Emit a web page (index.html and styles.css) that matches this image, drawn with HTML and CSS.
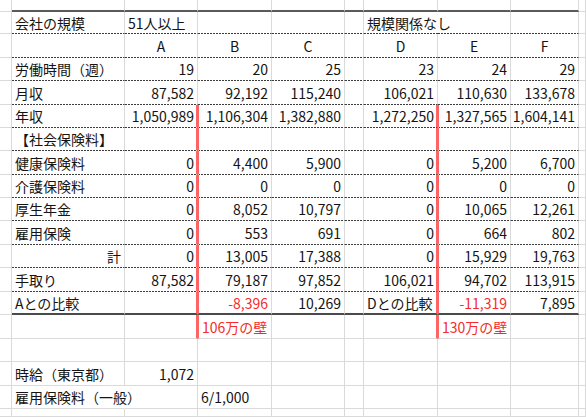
FILE: index.html
```html
<!DOCTYPE html>
<html lang="ja">
<head>
<meta charset="utf-8">
<title>社会保険料の比較</title>
<link rel="stylesheet" href="styles.css">
</head>
<body>
<div class="sheet">
  <div class="row">
    <div class="c"></div><div class="c top"></div><div class="c top"></div><div class="c top"></div><div class="c top"></div><div class="c top"></div><div class="c top"></div><div class="c top"></div><div class="c top"></div><div class="c"></div>
  </div>
  <div class="row">
    <div class="c"></div><div class="c d">会社の規模</div><div class="c d">51人以上</div><div class="c d"></div><div class="c d"></div><div class="c d"></div><div class="c d nr">規模関係なし</div><div class="c d"></div><div class="c d"></div><div class="c"></div>
  </div>
  <div class="row">
    <div class="c"></div><div class="c d"></div><div class="c d m">A</div><div class="c d m">B</div><div class="c d m">C</div><div class="c d"></div><div class="c d m">D</div><div class="c d m">E</div><div class="c d m">F</div><div class="c"></div>
  </div>
  <div class="row">
    <div class="c"></div><div class="c d">労働時間（週）</div><div class="c d n">19</div><div class="c d n">20</div><div class="c d n">25</div><div class="c d"></div><div class="c d n">23</div><div class="c d n">24</div><div class="c d n">29</div><div class="c"></div>
  </div>
  <div class="row">
    <div class="c"></div><div class="c d">月収</div><div class="c d n">87,582</div><div class="c d n">92,192</div><div class="c d n">115,240</div><div class="c d"></div><div class="c d n">106,021</div><div class="c d n">110,630</div><div class="c d n">133,678</div><div class="c"></div>
  </div>
  <div class="row">
    <div class="c"></div><div class="c d">年収</div><div class="c d n wr">1,050,989</div><div class="c d n wl">1,106,304</div><div class="c d n">1,382,880</div><div class="c d"></div><div class="c d n wr">1,272,250</div><div class="c d n wl">1,327,565</div><div class="c d n">1,604,141</div><div class="c"></div>
  </div>
  <div class="row">
    <div class="c"></div><div class="c d">【社会保険料】</div><div class="c d wr"></div><div class="c d wl"></div><div class="c d"></div><div class="c d"></div><div class="c d wr"></div><div class="c d wl"></div><div class="c d"></div><div class="c"></div>
  </div>
  <div class="row">
    <div class="c"></div><div class="c d">健康保険料</div><div class="c d n wr">0</div><div class="c d n wl">4,400</div><div class="c d n">5,900</div><div class="c d"></div><div class="c d n wr">0</div><div class="c d n wl">5,200</div><div class="c d n">6,700</div><div class="c"></div>
  </div>
  <div class="row">
    <div class="c"></div><div class="c d">介護保険料</div><div class="c d n wr">0</div><div class="c d n wl">0</div><div class="c d n">0</div><div class="c d"></div><div class="c d n wr">0</div><div class="c d n wl">0</div><div class="c d n">0</div><div class="c"></div>
  </div>
  <div class="row">
    <div class="c"></div><div class="c d">厚生年金</div><div class="c d n wr">0</div><div class="c d n wl">8,052</div><div class="c d n">10,797</div><div class="c d"></div><div class="c d n wr">0</div><div class="c d n wl">10,065</div><div class="c d n">12,261</div><div class="c"></div>
  </div>
  <div class="row">
    <div class="c"></div><div class="c d">雇用保険</div><div class="c d n wr">0</div><div class="c d n wl">553</div><div class="c d n">691</div><div class="c d"></div><div class="c d n wr">0</div><div class="c d n wl">664</div><div class="c d n">802</div><div class="c"></div>
  </div>
  <div class="row">
    <div class="c"></div><div class="c d n">計</div><div class="c d n wr">0</div><div class="c d n wl">13,005</div><div class="c d n">17,388</div><div class="c d"></div><div class="c d n wr">0</div><div class="c d n wl">15,929</div><div class="c d n">19,763</div><div class="c"></div>
  </div>
  <div class="row">
    <div class="c"></div><div class="c d">手取り</div><div class="c d n wr">87,582</div><div class="c d n wl">79,187</div><div class="c d n">97,852</div><div class="c d"></div><div class="c d n wr">106,021</div><div class="c d n wl">94,702</div><div class="c d n">113,915</div><div class="c"></div>
  </div>
  <div class="row">
    <div class="c"></div><div class="c s">Aとの比較</div><div class="c s wr"></div><div class="c s n wl red">-8,396</div><div class="c s n">10,269</div><div class="c s"></div><div class="c s wr">Dとの比較</div><div class="c s n wl red">-11,319</div><div class="c s n">7,895</div><div class="c"></div>
  </div>
  <div class="row">
    <div class="c"></div><div class="c"></div><div class="c wr"></div><div class="c wl red">106万の壁</div><div class="c"></div><div class="c"></div><div class="c wr"></div><div class="c wl red">130万の壁</div><div class="c"></div><div class="c"></div>
  </div>
  <div class="row">
    <div class="c"></div><div class="c"></div><div class="c"></div><div class="c"></div><div class="c"></div><div class="c"></div><div class="c"></div><div class="c"></div><div class="c"></div><div class="c"></div>
  </div>
  <div class="row">
    <div class="c"></div><div class="c">時給（東京都）</div><div class="c n">1,072</div><div class="c"></div><div class="c"></div><div class="c"></div><div class="c"></div><div class="c"></div><div class="c"></div><div class="c"></div>
  </div>
  <div class="row">
    <div class="c"></div><div class="c nr">雇用保険料（一般）</div><div class="c"></div><div class="c">6/1,000</div><div class="c"></div><div class="c"></div><div class="c"></div><div class="c"></div><div class="c"></div><div class="c"></div>
  </div>
  <div class="row">
    <div class="c"></div><div class="c"></div><div class="c"></div><div class="c"></div><div class="c"></div><div class="c"></div><div class="c"></div><div class="c"></div><div class="c"></div><div class="c"></div>
  </div>
</div>
</body>
</html>
```

FILE: styles.css
```css
html, body {
  margin: 0;
  padding: 0;
  background: #fff;
}

body {
  width: 586px;
  height: 417px;
  overflow: hidden;
  font-family: "Noto Sans CJK JP", "Noto Sans", sans-serif;
  font-size: 14px;
  color: #141414;
}

.sheet {
  display: grid;
  grid-template-columns: 12px 113px 73px 74px 73px 19px 74px 73px 68px 1fr;
  grid-template-rows: 12px 22px 24px 23px 24px 23px 23px 24px 23px 23px 24px 23px 24px 23px 24px 23px 24px 23px 8px;
}

.row {
  display: contents;
}

.c {
  box-sizing: border-box;
  display: flex;
  align-items: center;
  justify-content: flex-start;
  padding: 0 3px 0 3px;
  border-right: 1px solid #dadada;
  border-bottom: 1px solid #dadada;
  white-space: nowrap;
  overflow: visible;
  line-height: 1;
  min-width: 0;
}

/* right-aligned numbers */
.n {
  justify-content: flex-end;
}

/* centered headers */
.m {
  justify-content: center;
  padding: 0;
}

/* hide gridline where text overflows */
.nr {
  border-right-color: transparent;
}

/* thick top rule of the table */
.top {
  border-bottom: 2px solid #5a5a5a;
}

/* dotted hairline row separators */
.d {
  border-bottom: 1px solid transparent;
  background-image: repeating-linear-gradient(to right, #3c3c3c 0 2px, transparent 2px 3px);
  background-size: 100% 1px;
  background-position: left bottom;
  background-repeat: no-repeat;
  background-origin: border-box;
}

/* solid rule under the comparison row */
.s {
  border-bottom: 2px solid #4a4a4a;
}

/* red "wall" lines */
.wr {
  border-right: 2px solid #ff6363;
  padding-right: 2px;
}

.wl {
  border-left: 1px solid #ff6363;
}

.red {
  color: #f42c2c;
}
```
